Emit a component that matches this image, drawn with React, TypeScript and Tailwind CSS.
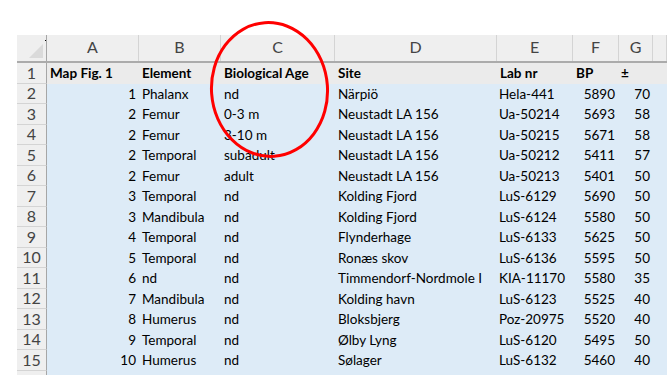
const cols = ['A', 'B', 'C', 'D', 'E', 'F', 'G', ''];

type Row = [string, string, string, string, string, string, string];

const rows: Row[] = [
  ['1', 'Phalanx', 'nd', 'Närpiö', 'Hela-441', '5890', '70'],
  ['2', 'Femur', '0-3 m', 'Neustadt LA 156', 'Ua-50214', '5693', '58'],
  ['2', 'Femur', '3-10 m', 'Neustadt LA 156', 'Ua-50215', '5671', '58'],
  ['2', 'Temporal', 'subadult', 'Neustadt LA 156', 'Ua-50212', '5411', '57'],
  ['2', 'Femur', 'adult', 'Neustadt LA 156', 'Ua-50213', '5401', '50'],
  ['3', 'Temporal', 'nd', 'Kolding Fjord', 'LuS-6129', '5690', '50'],
  ['3', 'Mandibula', 'nd', 'Kolding Fjord', 'LuS-6124', '5580', '50'],
  ['4', 'Temporal', 'nd', 'Flynderhage', 'LuS-6133', '5625', '50'],
  ['5', 'Temporal', 'nd', 'Ronæs skov', 'LuS-6136', '5595', '50'],
  ['6', 'nd', 'nd', 'Timmendorf-Nordmole I', 'KIA-11170', '5580', '35'],
  ['7', 'Mandibula', 'nd', 'Kolding havn', 'LuS-6123', '5525', '40'],
  ['8', 'Humerus', 'nd', 'Bloksbjerg', 'Poz-20975', '5520', '40'],
  ['9', 'Temporal', 'nd', 'Ølby Lyng', 'LuS-6120', '5495', '50'],
  ['10', 'Humerus', 'nd', 'Sølager', 'LuS-6132', '5460', '40'],
  ['11', 'Phalanx', 'nd', 'Dragsholm', 'LuS-6131', '5440', '50'],
];

const grid = 'grid grid-cols-[30px_92px_82px_114px_162px_76px_46px_34px_1fr]';
const cells = 'grid grid-cols-[92px_82px_114px_162px_76px_46px_34px_1fr]';

function RowHead({ n }: { n: number }) {
  return (
    <div className="h-[20.5px] flex items-center justify-center bg-[#efefef] border-b border-[#d4d4d4] border-r border-r-[#a6a6a6] text-[16px] text-[#444]">
      {n}
    </div>
  );
}

export default function App() {
  return (
    <div className="relative w-[667px] h-[375px] overflow-hidden bg-white font-['Lato',sans-serif] text-[13.5px] text-black">
      <div className="pt-[35px] pl-[17px]">
        {/* column letters */}
        <div className={`${grid} h-[28px] bg-[#efefef] border-b-2 border-[#ababab]`}>
          <div className="relative border-r border-[#a6a6a6]">
            <div className="absolute right-[3px] bottom-[3px] w-0 h-0 border-l-[14px] border-l-transparent border-b-[14px] border-b-[#dadada]" />
            <div className="absolute right-0 top-[5px] w-[1px] h-[1px] bg-black" />
          </div>
          {cols.map((c, i) => (
            <div
              key={i}
              className="flex items-end justify-center pb-[2px] border-r border-[#d4d4d4] text-[16px] text-[#444]"
            >
              {c}
            </div>
          ))}
        </div>

        {/* header row */}
        <div className={grid}>
          <RowHead n={1} />
          <div className={`${cells} h-[20.5px] bg-[#ebebeb] col-span-8 items-center font-bold`}>
            <div className="pl-[3px]">Map Fig. 1</div>
            <div className="pl-[3px]">Element</div>
            <div className="pl-[3px]">Biological Age</div>
            <div className="pl-[3px]">Site</div>
            <div className="pl-[3px]">Lab nr</div>
            <div className="pl-[3px]">BP</div>
            <div className="pl-[2px]">±</div>
            <div />
          </div>
        </div>

        {rows.map((r, i) => (
          <div key={i} className={grid}>
            <RowHead n={i + 2} />
            <div className={`${cells} h-[20.5px] bg-[#ddebf7] col-span-8 items-center whitespace-nowrap`}>
              <div className="pr-[3px] text-right">{r[0]}</div>
              <div className="pl-[3px]">{r[1]}</div>
              <div className="pl-[3px]">{r[2]}</div>
              <div className="pl-[3px] overflow-hidden">{r[3]}</div>
              <div className="pl-[2px]">{r[4]}</div>
              <div className="pr-[4px] text-right">{r[5]}</div>
              <div className="pr-[3px] text-right">{r[6]}</div>
              <div />
            </div>
          </div>
        ))}
      </div>

      {/* red annotation ring */}
      <div className="absolute left-[210px] top-[21px] w-[119px] h-[137px] rounded-[50%] border-[3px] border-[#ff0000] -rotate-[4deg]" />
    </div>
  );
}
